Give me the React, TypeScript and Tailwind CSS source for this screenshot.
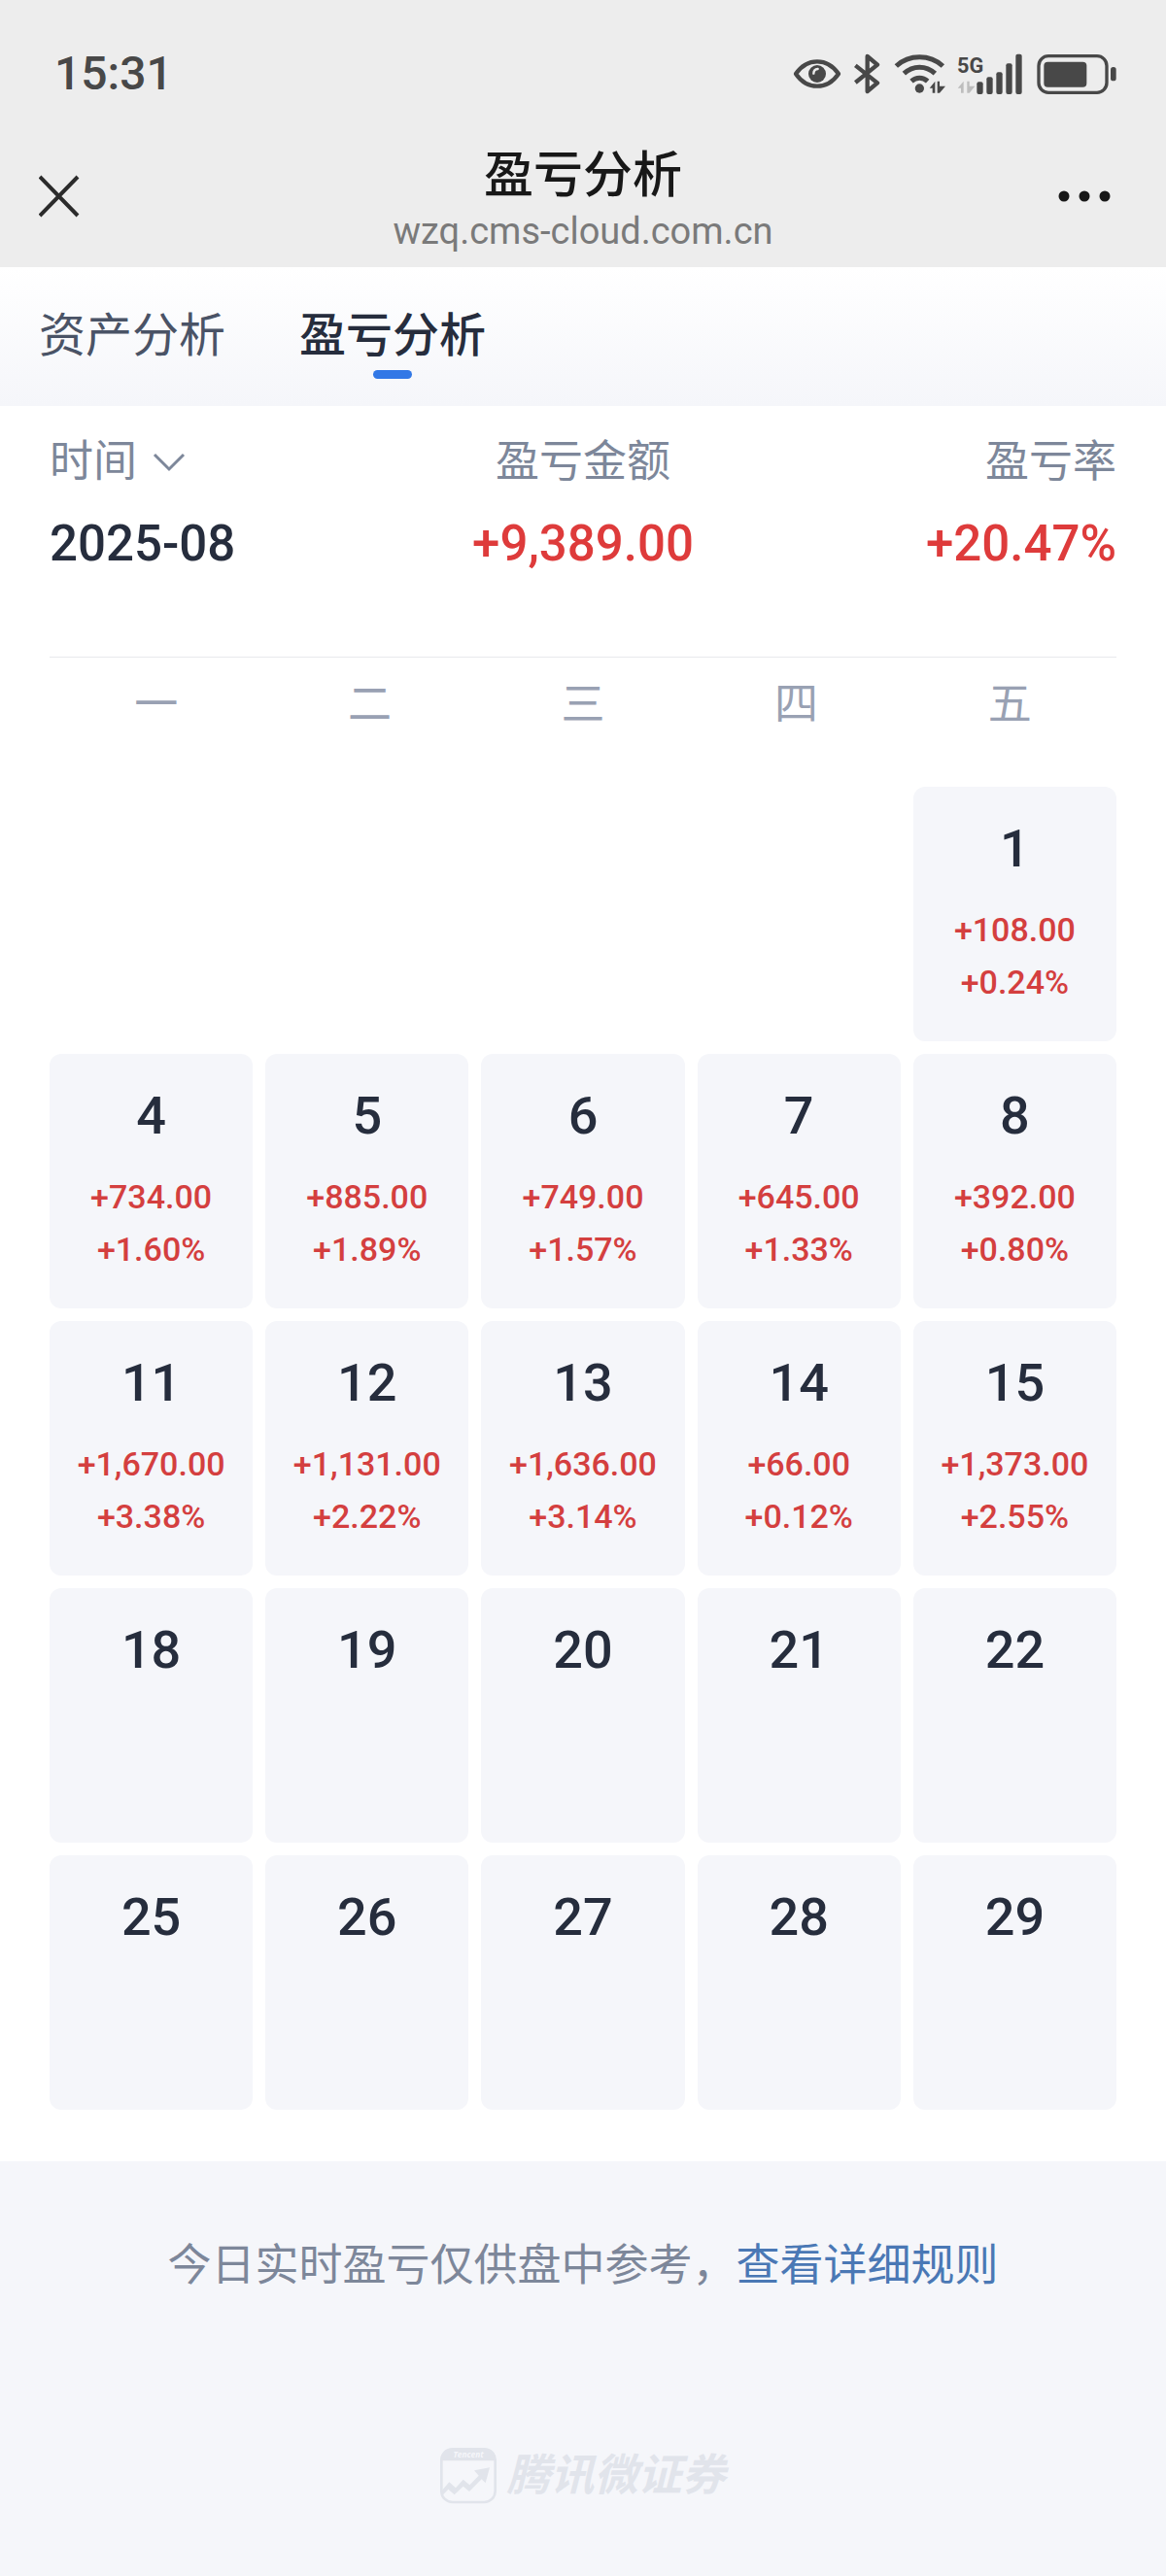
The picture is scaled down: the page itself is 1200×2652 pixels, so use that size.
import React from "react";

type Day = { day: number; amount?: string; rate?: string };

const weekdays = ["一", "二", "三", "四", "五"];

const days: Day[] = [
  { day: 1, amount: "+108.00", rate: "+0.24%" },
  { day: 4, amount: "+734.00", rate: "+1.60%" },
  { day: 5, amount: "+885.00", rate: "+1.89%" },
  { day: 6, amount: "+749.00", rate: "+1.57%" },
  { day: 7, amount: "+645.00", rate: "+1.33%" },
  { day: 8, amount: "+392.00", rate: "+0.80%" },
  { day: 11, amount: "+1,670.00", rate: "+3.38%" },
  { day: 12, amount: "+1,131.00", rate: "+2.22%" },
  { day: 13, amount: "+1,636.00", rate: "+3.14%" },
  { day: 14, amount: "+66.00", rate: "+0.12%" },
  { day: 15, amount: "+1,373.00", rate: "+2.55%" },
  { day: 18 },
  { day: 19 },
  { day: 20 },
  { day: 21 },
  { day: 22 },
  { day: 25 },
  { day: 26 },
  { day: 27 },
  { day: 28 },
  { day: 29 },
];

function EyeIcon() {
  return (
    <svg width="50" height="42" viewBox="0 0 150 126" aria-hidden="true">
      <path
        d="M9 63C24 41 47 25 75 25s51 16 66 38c-15 22-38 38-66 38S24 85 9 63Z"
        fill="none"
        stroke="#484848"
        strokeWidth="13"
        strokeLinejoin="round"
      />
      <circle cx="75" cy="63" r="27" fill="#484848" />
      <path d="M64 62c0-8 5-13 13-14" fill="none" stroke="#ededed" strokeWidth="7" strokeLinecap="round" />
    </svg>
  );
}

function BluetoothIcon() {
  return (
    <svg width="28" height="42" viewBox="0 0 84 126" aria-hidden="true">
      <path
        d="M4 37l68 54-31 26V9l31 26L4 90"
        fill="none"
        stroke="#484848"
        strokeWidth="13"
        strokeLinejoin="round"
      />
    </svg>
  );
}

function WifiIcon() {
  return (
    <svg width="54" height="42" viewBox="0 0 162 126" aria-hidden="true">
      <g fill="none" stroke="#484848" strokeWidth="15">
        <path d="M7 39c40-37 104-37 144 0" />
        <path d="M31 62c28-26 68-26 96 0" />
        <path d="M54 86c15-14 35-14 50 0" />
      </g>
      <circle cx="79" cy="108" r="14" fill="#484848" />
      <path d="M110 107l17-21v36h-8v-15zM134 86h7v15h18l-18 21h-7z" fill="#484848" />
    </svg>
  );
}

function SignalIcon() {
  return (
    <svg width="68" height="42" viewBox="0 0 204 126" aria-hidden="true">
      <text x="0" y="60" fontSize="65" fontWeight="700" fill="#484848" fontFamily="'Roboto', sans-serif">
        5G
      </text>
      <path d="M2 107l18-21v36h-8v-15zM31 86h7v15h17l-17 21h-7z" fill="#bdbdbd" />
      <g fill="#484848">
        <rect x="61" y="88" width="19" height="38" rx="6" />
        <rect x="91" y="73" width="19" height="53" rx="6" />
        <rect x="121" y="58" width="19" height="68" rx="6" />
        <rect x="151" y="31" width="19" height="95" rx="6" />
        <rect x="181" y="2" width="19" height="124" rx="6" />
      </g>
    </svg>
  );
}

function BatteryIcon() {
  return (
    <svg width="82" height="42" viewBox="0 0 246 126" aria-hidden="true">
      <rect x="6" y="8" width="210" height="113" rx="30" fill="none" stroke="#484848" strokeWidth="10" />
      <rect x="22" y="26" width="132" height="78" rx="12" fill="#484848" />
      <rect x="228" y="42" width="17" height="43" rx="8" fill="#484848" />
    </svg>
  );
}

function StatusBar() {
  return (
    <div className="flex h-[152px] items-center justify-between pr-[51px] pl-14">
      <time className="text-[48px] leading-[56px] font-medium text-[#484848]">15:31</time>
      <div className="flex items-center">
        <EyeIcon />
        <span className="w-[13px]" />
        <BluetoothIcon />
        <span className="w-[13px]" />
        <WifiIcon />
        <span className="w-[11px]" />
        <SignalIcon />
        <span className="w-[14px]" />
        <BatteryIcon />
      </div>
    </div>
  );
}

function NavBar() {
  return (
    <header className="grid h-[123px] grid-cols-[1fr_auto_1fr] items-start px-10">
      <button type="button" aria-label="关闭" className="mt-7 justify-self-start">
        <svg width="42" height="44" viewBox="0 0 42 44" fill="none" stroke="#2b2b2b" strokeWidth="4">
          <path d="M1 2l39 40M40 2L1 42" />
        </svg>
      </button>
      <div className="text-center">
        <h1 className="text-[51px] leading-[58px] font-medium text-[#181818]">盈亏分析</h1>
        <p className="text-[38px] leading-[56px] text-[#7a7a7a]">wzq.cms-cloud.com.cn</p>
      </div>
      <button type="button" aria-label="更多" className="mt-7 mr-4 justify-self-end">
        <svg width="56" height="44" viewBox="0 0 56 44" fill="#181818">
          <circle cx="7" cy="22" r="5.5" />
          <circle cx="28" cy="22" r="5.5" />
          <circle cx="49" cy="22" r="5.5" />
        </svg>
      </button>
    </header>
  );
}

function Tabs() {
  return (
    <nav className="flex items-start gap-[76px] bg-linear-to-b from-white to-[#f5f6fa] px-10 pt-[39px] pb-7 text-[48px] leading-[64px]">
      <button type="button" className="text-[#4a5366]">
        资产分析
      </button>
      <button type="button" aria-current="page" className="flex flex-col items-center gap-[3px] font-medium text-[#262d3d]">
        盈亏分析
        <span className="h-[9px] w-10 rounded-full bg-[#3278e6]" />
      </button>
    </nav>
  );
}

function Summary() {
  return (
    <section className="mx-[51px] grid grid-cols-3 border-b border-[#e8e9ec] pt-7 pb-[86px] text-[45px] leading-[60px] text-[#7d879a]">
      <div>
        <button type="button" className="flex items-center gap-4">
          时间
          <svg width="34" height="20" viewBox="0 0 34 20" fill="none" stroke="#7d879a" strokeWidth="3">
            <path d="M2 2l15 15L32 2" />
          </svg>
        </button>
        <p className="mt-6 text-[51px] font-medium text-[#262d3d]">2025-08</p>
      </div>
      <div className="text-center">
        <p>盈亏金额</p>
        <p className="mt-6 text-[51px] font-medium text-[#de3b3b]">+9,389.00</p>
      </div>
      <div className="text-right">
        <p>盈亏率</p>
        <p className="mt-6 text-[51px] font-medium text-[#de3b3b]">+20.47%</p>
      </div>
    </section>
  );
}

function Calendar() {
  return (
    <section className="px-[51px] pb-[53px]">
      <div className="grid grid-cols-5 pt-[17px] pb-[52px] text-center text-[45px] leading-[64px] text-[#99a1b3]">
        {weekdays.map((name) => (
          <span key={name}>{name}</span>
        ))}
      </div>
      <div className="grid auto-rows-[262px] grid-cols-5 gap-[13px]">
        {days.map(({ day, amount, rate }) => (
          <div
            key={day}
            className={
              day === 1
                ? "col-start-5 rounded-xl bg-[#f5f6fa] pt-8 text-center"
                : "rounded-xl bg-[#f5f6fa] pt-8 text-center"
            }
          >
            <p className="text-[54px] leading-[64px] font-medium text-[#262d3d]">{day}</p>
            {amount && (
              <div className="mt-6 text-[34px] leading-[54px] font-medium text-[#d43f3f]">
                <p>{amount}</p>
                <p>{rate}</p>
              </div>
            )}
          </div>
        ))}
      </div>
    </section>
  );
}

function BrandMark() {
  return (
    <svg width="58" height="58" viewBox="0 0 174 174" aria-hidden="true">
      <rect x="4" y="4" width="166" height="164" rx="34" fill="none" stroke="#e1e4eb" strokeWidth="8" />
      <path d="M2 40V36A34 34 0 0 1 36 2h102a34 34 0 0 1 34 34v4z" fill="#e1e4eb" />
      <text
        x="87"
        y="30"
        textAnchor="middle"
        fontSize="25"
        fontWeight="700"
        fontStyle="italic"
        fill="#f5f6fa"
        fontFamily="'Open Sans', sans-serif"
      >
        Tencent
      </text>
      <path
        d="M6 131l22-25 20 18 23-26 20 17 28-29-14-16 48-9-13 48-12-12-38 38-19-16-27 26-19-17-19 20z"
        fill="#e1e4eb"
      />
    </svg>
  );
}

function Footer() {
  return (
    <footer className="flex flex-col items-center pt-[76px] pb-16">
      <p className="text-[45px] leading-[64px] text-[#7d879a]">
        今日实时盈亏仅供盘中参考，
        <a href="#rules" className="text-[#4a78b5]">
          查看详细规则
        </a>
      </p>
      <div className="mt-[152px] flex items-center gap-2.5">
        <BrandMark />
        <span className="text-[45px] leading-[64px] font-bold text-[#e1e4eb] italic">腾讯微证券</span>
      </div>
    </footer>
  );
}

export default function App() {
  return (
    <div className="min-h-screen bg-[#f5f6fa] font-['Roboto','Noto_Sans_CJK_SC',sans-serif]">
      <div className="bg-[#ededed]">
        <StatusBar />
        <NavBar />
      </div>
      <main className="bg-white">
        <Tabs />
        <Summary />
        <Calendar />
      </main>
      <Footer />
    </div>
  );
}
